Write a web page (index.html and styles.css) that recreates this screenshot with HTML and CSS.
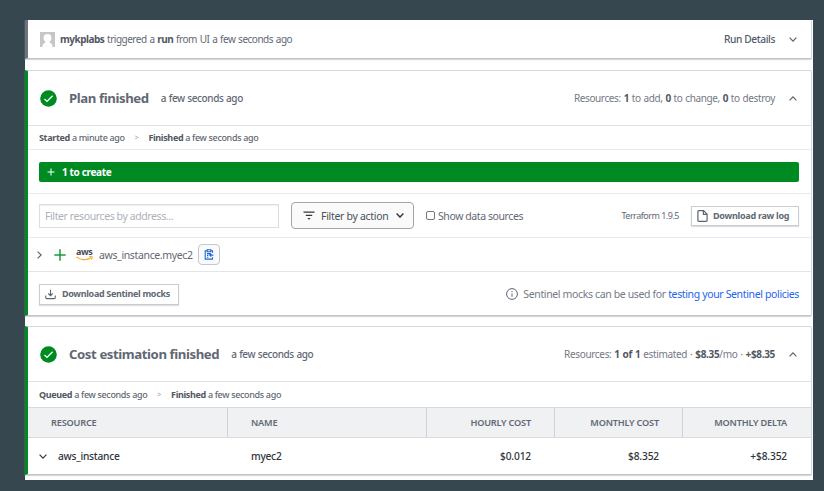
FILE: index.html
```html
<!DOCTYPE html>
<html lang="en">
<head>
<meta charset="utf-8">
<title>Run details</title>
<link rel="stylesheet" href="styles.css">
</head>
<body>
<main class="page">
  <section class="card card-trigger">
    <svg class="avatar" viewBox="0 0 15 15"><path fill="#c6c6c8" d="M0 0h15v15h-2.300c-.2-2.400-1-3.800-3-4.300v-1c1.200-.9 1.700-2 1.700-3.700C11.400 3.500 10 2 7.500 2S3.600 3.500 3.600 6c0 1.700.6 2.800 1.700 3.700v1c-2 .5-2.800 1.900-3 4.300H0z"/></svg>
    <span class="trigger-text"><b>mykplabs</b> triggered a <b>run</b> from UI a few seconds ago</span>
    <span class="run-details">Run Details</span>
    <svg class="chev" viewBox="0 0 8 5"><path d="M.6.6 4 4.100 7.400.6"/></svg>
  </section>

  <section class="card card-plan">
    <header class="card-head">
      <svg class="check" viewBox="0 0 17 17"><circle cx="8.500" cy="8.500" r="8.300"/><path d="m4.500 9 2.500 2.400 5.600-5.600"/></svg>
      <h2 class="title-plan">Plan finished</h2>
      <span class="ago">a few seconds ago</span>
      <span class="summary summary-plan">Resources: <b>1</b> to add, <b>0</b> to change, <b>0</b> to destroy</span>
      <svg class="chev" viewBox="0 0 8 5"><path d="M.6 4.400 4 .9l3.400 3.500"/></svg>
    </header>
    <div class="meta"><span><b>Started</b> a minute ago</span><i>&gt;</i><span><b>Finished</b> a few seconds ago</span></div>
    <div class="bar-row">
      <div class="create-bar">
        <svg class="bar-plus" viewBox="0 0 8 8"><path d="M4 .5v7M.5 4h7"/></svg>
        <span>1 to create</span>
      </div>
    </div>
    <div class="filters">
      <div class="field">Filter resources by address...</div>
      <div class="select">
        <svg class="filter-icon" viewBox="0 0 12 9"><path d="M.5 1.200h11M2.800 4.400h6.400M4.800 7.600h2.400"/></svg>
        <span>Filter by action</span>
        <svg class="select-chev" viewBox="0 0 8 5"><path d="M.6.6 4 4.100 7.400.6"/></svg>
      </div>
      <span class="checkbox"></span>
      <span class="show-data">Show data sources</span>
      <span class="version">Terraform 1.9.5</span>
      <div class="button button-log">
        <svg class="file-icon" viewBox="0 0 11 12"><path d="M1.900.7h4.700l3.500 3.500v6.100a1 1 0 0 1-1 1H1.900a1 1 0 0 1-1-1V1.700a1 1 0 0 1 1-1zM6.400.9v3.500H10"/></svg>
        <span>Download raw log</span>
      </div>
    </div>
    <div class="resource">
      <svg class="row-chev" viewBox="0 0 5 8"><path d="M.6.6 4.200 4 .6 7.400"/></svg>
      <svg class="row-plus" viewBox="0 0 12 12"><path d="M6 .3v11.400M.3 6h11.400"/></svg>
      <span class="aws"><span class="aws-word">aws</span><svg class="aws-smile" viewBox="0 0 17 5"><path d="M.4.8C4.500 4.300 11 4.600 15 1.800M13.300.8c1.400-.3 2.500-.2 2.800.1s0 1.600-.8 2.600"/></svg></span>
      <span class="address">aws_instance.myec2</span>
      <span class="copy"><svg viewBox="0 0 10 11"><path d="M3 1.700H1.200v8.400h7.300V8.200M7 1.700h1.500v2M3.200.7h3.600v2H3.200zM3 4.600h3.500M3 6.400h1.300M3 8.200h1.300M9.400 6.100H5.800M7.200 4.600 5.700 6.100l1.500 1.600"/></svg></span>
    </div>
    <footer class="foot">
      <div class="button button-mocks">
        <svg class="download-icon" viewBox="0 0 12 11"><path d="M6 .4v6.200M3.600 4.400 6 6.800l2.400-2.400M.8 6.500v2.300c0 .8.400 1.200 1.200 1.200h8c.8 0 1.200-.4 1.200-1.200V6.500"/></svg>
        <span>Download Sentinel mocks</span>
      </div>
      <svg class="info" viewBox="0 0 12 12"><circle cx="6" cy="6" r="5.400"/><path d="M6 5.500v3.300M6 3v1.200"/></svg>
      <span class="note">Sentinel mocks can be used for <a>testing your Sentinel policies</a></span>
    </footer>
  </section>

  <section class="card card-cost">
    <header class="card-head">
      <svg class="check" viewBox="0 0 17 17"><circle cx="8.500" cy="8.500" r="8.300"/><path d="m4.500 9 2.500 2.400 5.600-5.600"/></svg>
      <h2 class="title-cost">Cost estimation finished</h2>
      <span class="ago">a few seconds ago</span>
      <span class="summary summary-cost">Resources: <b>1 of 1</b> estimated · <b>$8.35</b>/mo · <b>+$8.35</b></span>
      <svg class="chev" viewBox="0 0 8 5"><path d="M.6 4.400 4 .9l3.400 3.500"/></svg>
    </header>
    <div class="meta meta-cost"><span><b>Queued</b> a few seconds ago</span><i>&gt;</i><span><b>Finished</b> a few seconds ago</span></div>
    <div class="table">
      <div class="th">RESOURCE</div><div class="th">NAME</div><div class="th num">HOURLY COST</div><div class="th num">MONTHLY COST</div><div class="th num">MONTHLY DELTA</div>
      <div class="td first"><svg class="td-chev" viewBox="0 0 8 5"><path d="M.6.6 4 4.100 7.400.6"/></svg><span>aws_instance</span></div><div class="td">myec2</div><div class="td num">$0.012</div><div class="td num">$8.352</div><div class="td num">+$8.352</div>
    </div>
  </section>
</main>
</body>
</html>
```
FILE: styles.css
```css
* { box-sizing: border-box; }
body {
  margin: 0;
  height: 491px;
  padding: 20px 11px 11px 25px;
  background: #37474f;
  color: #626873;
  font: 10.5px/14px "Noto Sans", "Open Sans", sans-serif;
  overflow: hidden;
}
.page { height: 460px; padding-right: 1px; background: #fff; }
svg { display: block; flex: none; fill: none; stroke: #5c6370; stroke-width: 1.2; }
span, h2 { white-space: nowrap; }
b { font-weight: 700; color: #525762; }
.card {
  border: 1px solid #d5d8de;
  border-left: 3px solid #008a22;
  border-bottom: 1px solid #c2c5cb;
  border-radius: 0 2px 2px 0;
  box-shadow: 0 1px 1px #d0d2d7;
  background: #fff;
}
.card-trigger {
  display: flex;
  align-items: center;
  height: 39px;
  padding: 0 14px 0 12px;
  border-top: 0;
  border-left-color: #6f7380;
  margin-bottom: 11px;
}
.avatar { width: 15px; height: 15px; margin-right: 6px; stroke: none; }
.trigger-text { margin-left: -1px; font-size: 10px; letter-spacing: -.5px; word-spacing: .7px; }
.run-details { margin-left: auto; margin-right: 14px; color: #525a6b; font-weight: 500; font-size: 10.2px; letter-spacing: -.4px; }
.chev { width: 8px; height: 5px; }
.card-plan { height: 246px; margin-bottom: 10px; }
.card-cost { height: 149px; }
.card-head {
  display: flex;
  align-items: center;
  height: 55px;
  padding: 0 14px 0 12px;
  border-bottom: 1px solid #dfe1e5;
}
.check { width: 17px; height: 17px; margin-right: 12px; stroke: #fff; stroke-width: 1.3; }
.check circle { fill: #008a22; stroke: none; }
h2 { margin: 0 12px 0 0; font-size: 13.2px; line-height: 18px; font-weight: 700; letter-spacing: -.4px; }
.title-cost { letter-spacing: -.42px; }
.ago { font-size: 10px; font-weight: 500; letter-spacing: -.42px; word-spacing: .5px; }
.summary { margin-left: auto; margin-right: 14px; color: #747984; font-size: 10px; letter-spacing: -.38px; word-spacing: .6px; }
.summary-cost { letter-spacing: -.33px; }
.meta {
  display: flex;
  align-items: center;
  height: 24px;
  padding-left: 11px;
  border-bottom: 1px solid #eaebee;
  font-size: 9px;
  font-weight: 500;
  letter-spacing: -.34px;
}
.meta i { margin: 0 10px; color: #a3a7af; font-style: normal; font-size: 7px; }
.bar-row { padding: 12px 12px; height: 44px; border-bottom: 1px solid #eaebee; padding-left: 11px; }
.create-bar {
  display: flex;
  align-items: center;
  height: 20px;
  padding-left: 8px;
  border-radius: 2px;
  background: #008a22;
  color: #fff;
  font-size: 10px;
  font-weight: 700;
  letter-spacing: -.36px;
}
.bar-plus { width: 8px; height: 8px; margin-right: 7px; stroke: #fff; stroke-width: 1; }
.filters {
  display: flex;
  align-items: center;
  height: 44px;
  padding: 0 12px 0 11px;
  border-bottom: 1px solid #eaebee;
}
.field {
  width: 240px;
  height: 24px;
  padding: 4px 5px;
  border: 1px solid #dcdee2;
  color: #adb1b8;
  letter-spacing: -.4px;
  box-shadow: inset 0 1px 1px #f0f0f2;
}
.select {
  display: flex;
  align-items: center;
  width: 123px;
  height: 27px;
  margin-left: 12px;
  padding-left: 11px;
  border: 1px solid #a2a5ac;
  border-radius: 4px;
  background: #fafafa;
  color: #4b5059;
  letter-spacing: -.3px;
}
.filter-icon { width: 12px; height: 9px; margin-right: 6px; stroke: #333840; stroke-width: 1.3; }
.select-chev { width: 8px; height: 5px; margin-left: 8px; stroke: #333840; stroke-width: 1.4; }
.checkbox { width: 9px; height: 9px; margin: 0 3px 1px 12px; border: 1px solid #777; border-radius: 2px; }
.show-data { letter-spacing: -.42px; }
.version { margin-left: auto; margin-right: 12px; font-size: 9px; letter-spacing: -.5px; }
.button {
  display: flex;
  align-items: center;
  height: 21px;
  border: 1px solid #c9ccd2;
  box-shadow: 0 1px 1px #dcdee2;
  font-size: 9px;
  font-weight: 700;
  letter-spacing: -.33px;
}
.button-log { width: 108px; height: 20px; padding-left: 5px; letter-spacing: -.27px; }
.file-icon { width: 11px; height: 12px; margin-right: 5px; }
.resource {
  display: flex;
  align-items: center;
  height: 34px;
  padding-left: 9px;
  border-bottom: 1px solid #e4e5e8;
}
.row-chev { width: 5px; height: 8px; margin-right: 12px; }
.row-plus { width: 12px; height: 12px; margin-right: 10px; stroke: #1b9a38; stroke-width: 1.5; }
.aws { display: flex; flex-direction: column; width: 17px; margin-right: 6px; }
.aws-word { height: 8px; font-size: 9px; line-height: 7px; font-weight: 700; letter-spacing: -.4px; color: #444b5b; }
.aws-smile { width: 17px; height: 5px; stroke: #f5a224; stroke-width: 1.1; }
.address { letter-spacing: -.36px; }
.copy {
  display: grid;
  place-items: center;
  width: 22px;
  height: 21px;
  margin-left: 5px;
  border: 1px solid #c5c8ce;
  border-radius: 4px;
  background: #fafafa;
}
.copy svg { width: 10px; height: 11px; stroke: #2264d6; stroke-width: 1.1; }
.foot { display: flex; align-items: center; height: 44px; padding: 0 12px 0 11px; }
.button-mocks { width: 140px; padding-left: 5px; }
.download-icon { width: 11px; height: 11px; margin-right: 6px; }
.info { width: 12px; height: 12px; margin-left: auto; margin-right: 5px; stroke-width: 1; }
.note { color: #747984; letter-spacing: -.36px; }
.note a { color: #2563eb; }
.meta-cost { height: 25px; border: 0; }
.table {
  display: grid;
  grid-template-columns: 200px 199px 128px 128px 128px;
  grid-template-rows: 31px 36px;
}
.th, .td { display: flex; align-items: center; padding: 0 23px; }
.th {
  border-top: 1px solid #d8dade;
  border-bottom: 1px solid #d8dade;
  border-right: 1px solid #cfd1d6;
  background: #eff1f3;
  font-size: 9.2px;
  font-weight: 600;
  letter-spacing: -.2px;
}
.th:nth-child(5) { border-right: 0; padding-right: 24px; }
.num { justify-content: flex-end; }
.td { color: #30343b; font-weight: 500; font-size: 10.2px; letter-spacing: -.25px; }
.td.num { padding-right: 24px; letter-spacing: -.15px; }
.td.first { padding-left: 11px; }
.td-chev { width: 8px; height: 5px; margin-right: 11px; stroke: #333840; }
```
